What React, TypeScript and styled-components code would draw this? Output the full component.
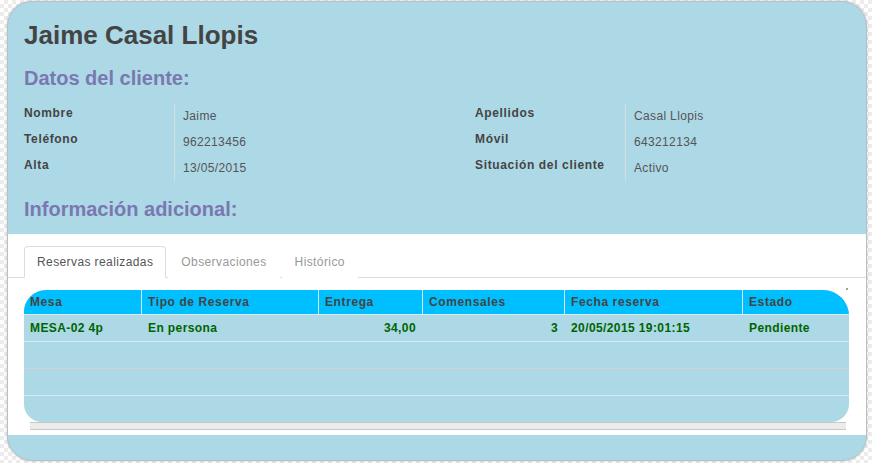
import React from "react";
import styled, { createGlobalStyle } from "styled-components";

const GlobalStyle = createGlobalStyle`
  html, body { margin: 0; padding: 0; }
  body {
    font-family: "Liberation Sans", Arial, sans-serif;
    background-color: #ffffff;
    background-image: conic-gradient(#ececec 25%, #ffffff 0 50%, #ececec 0 75%, #ffffff 0);
    background-size: 8px 8px;
    min-height: 463px;
  }
  #root { padding: 1px 0 0 7px; }
`;

const Card = styled.div`
  box-sizing: border-box;
  width: 860px;
  background: #add8e6;
  border: 1px solid #b4c2c7;
  border-radius: 25px;
  box-shadow: 0 0 3px rgba(0, 0, 0, 0.22);
  padding-bottom: 25px;
  overflow: hidden;
`;

const Header = styled.div`
  padding: 0 16px;
  display: flex;
  flex-direction: column;
`;

const Title = styled.h1`
  margin: 18px 0 0;
  font-size: 26px;
  line-height: 30px;
  font-weight: bold;
  color: #444444;
`;

const SectionTitle = styled.h2<{ $gap: number }>`
  margin: ${(p) => p.$gap}px 0 0;
  font-size: 20px;
  line-height: 24px;
  font-weight: bold;
  color: #7a78b1;
`;

const InfoGrid = styled.div`
  margin-top: 13px;
  display: grid;
  grid-template-columns: 150px 301px 150px 1fr;
  grid-auto-rows: 26px;
`;

const Label = styled.div`
  font-size: 12px;
  line-height: 14px;
  padding-top: 3px;
  font-weight: bold;
  color: #444444;
  letter-spacing: 0.65px;
`;

const Value = styled.div`
  font-size: 12px;
  line-height: 14px;
  padding: 6px 0 0 8px;
  color: #555555;
  letter-spacing: 0.35px;
  border-left: 1px solid #d4dde0;
`;

const Panel = styled.div`
  margin-top: 13px;
  background: #ffffff;
  padding: 12px 0 5px;
`;

const TabList = styled.div`
  display: flex;
  padding-left: 16px;
  border-bottom: 1px solid #dddddd;
`;

const Tab = styled.div<{ $active?: boolean }>`
  font-size: 12px;
  line-height: 18px;
  letter-spacing: 0.4px;
  padding: 6px 12px;
  margin-right: 2px;
  margin-bottom: -1px;
  border: 1px solid ${(p) => (p.$active ? "#dddddd" : "transparent")};
  border-bottom-color: ${(p) => (p.$active ? "#ffffff" : "transparent")};
  border-radius: 4px 4px 0 0;
  background: #ffffff;
  color: ${(p) => (p.$active ? "#555555" : "#999999")};
`;

const TableArea = styled.div`
  position: relative;
  padding: 12px 17px 0 16px;
`;

const Marker = styled.span`
  position: absolute;
  top: 10px;
  left: 838px;
  width: 2px;
  height: 2px;
  background: #a0a0a0;
`;

const Table = styled.div`
  border-radius: 22px 26px 18px 18px;
  overflow: hidden;
  background: #add8e6;
`;

const COLS = "117px 177px 104px 142px 178px 106px";

const HeadRow = styled.div`
  display: grid;
  grid-template-columns: ${COLS};
  height: 24px;
  background: #00bfff;
  border-bottom: 1px solid #dbe9ee;
`;

const HeadCell = styled.div`
  font-size: 12px;
  line-height: 24px;
  font-weight: bold;
  color: #444444;
  letter-spacing: 0.6px;
  padding: 0 6px;
  white-space: nowrap;
  & + & { border-left: 1px solid #dbe9ee; }
`;

const Row = styled.div<{ $line: string }>`
  display: grid;
  grid-template-columns: ${COLS};
  height: 26px;
  border-bottom: 1px solid ${(p) => p.$line};
  &:last-child { border-bottom: none; }
`;

const Cell = styled.div<{ $right?: boolean }>`
  font-size: 12px;
  line-height: 26px;
  font-weight: bold;
  color: #006400;
  letter-spacing: 0.4px;
  padding: 0 6px;
  white-space: nowrap;
  text-align: ${(p) => (p.$right ? "right" : "left")};
  & + & { border-left: 1px solid transparent; }
`;

const ScrollBar = styled.div`
  height: 6px;
  margin: 0 3px 0 6px;
  background: #ececec;
  border-top: 1px solid #c8c8c8;
  border-bottom: 1px solid #c8c8c8;
`;

const info = [
  ["Nombre", "Jaime", "Apellidos", "Casal Llopis"],
  ["Teléfono", "962213456", "Móvil", "643212134"],
  ["Alta", "13/05/2015", "Situación del cliente", "Activo"],
];

const headers = ["Mesa", "Tipo de Reserva", "Entrega", "Comensales", "Fecha reserva", "Estado"];

const rows: (string[] | null)[] = [
  ["MESA-02 4p", "En persona", "34,00", "3", "20/05/2015 19:01:15", "Pendiente"],
  null,
  null,
  null,
];

const lineColors = ["#dbe9ee", "#cfd3d5", "#dbe9ee", "#dbe9ee"];
const rightCols = [2, 3];

export default function App() {
  return (
    <>
      <GlobalStyle />
      <Card>
        <Header>
          <Title>Jaime Casal Llopis</Title>
          <SectionTitle $gap={16}>Datos del cliente:</SectionTitle>
          <InfoGrid>
            {info.map((r) => (
              <React.Fragment key={r[0]}>
                <Label>{r[0]}</Label>
                <Value>{r[1]}</Value>
                <Label>{r[2]}</Label>
                <Value>{r[3]}</Value>
              </React.Fragment>
            ))}
          </InfoGrid>
          <SectionTitle $gap={16}>Información adicional:</SectionTitle>
        </Header>
        <Panel>
          <TabList>
            <Tab $active>Reservas realizadas</Tab>
            <Tab>Observaciones</Tab>
            <Tab>Histórico</Tab>
          </TabList>
          <TableArea>
            <Marker />
            <Table>
              <HeadRow>
                {headers.map((h) => (
                  <HeadCell key={h}>{h}</HeadCell>
                ))}
              </HeadRow>
              {rows.map((r, i) => (
                <Row key={i} $line={lineColors[i]}>
                  {headers.map((h, c) => (
                    <Cell key={h} $right={rightCols.includes(c)}>
                      {r ? r[c] : ""}
                    </Cell>
                  ))}
                </Row>
              ))}
            </Table>
            <ScrollBar />
          </TableArea>
        </Panel>
      </Card>
    </>
  );
}
